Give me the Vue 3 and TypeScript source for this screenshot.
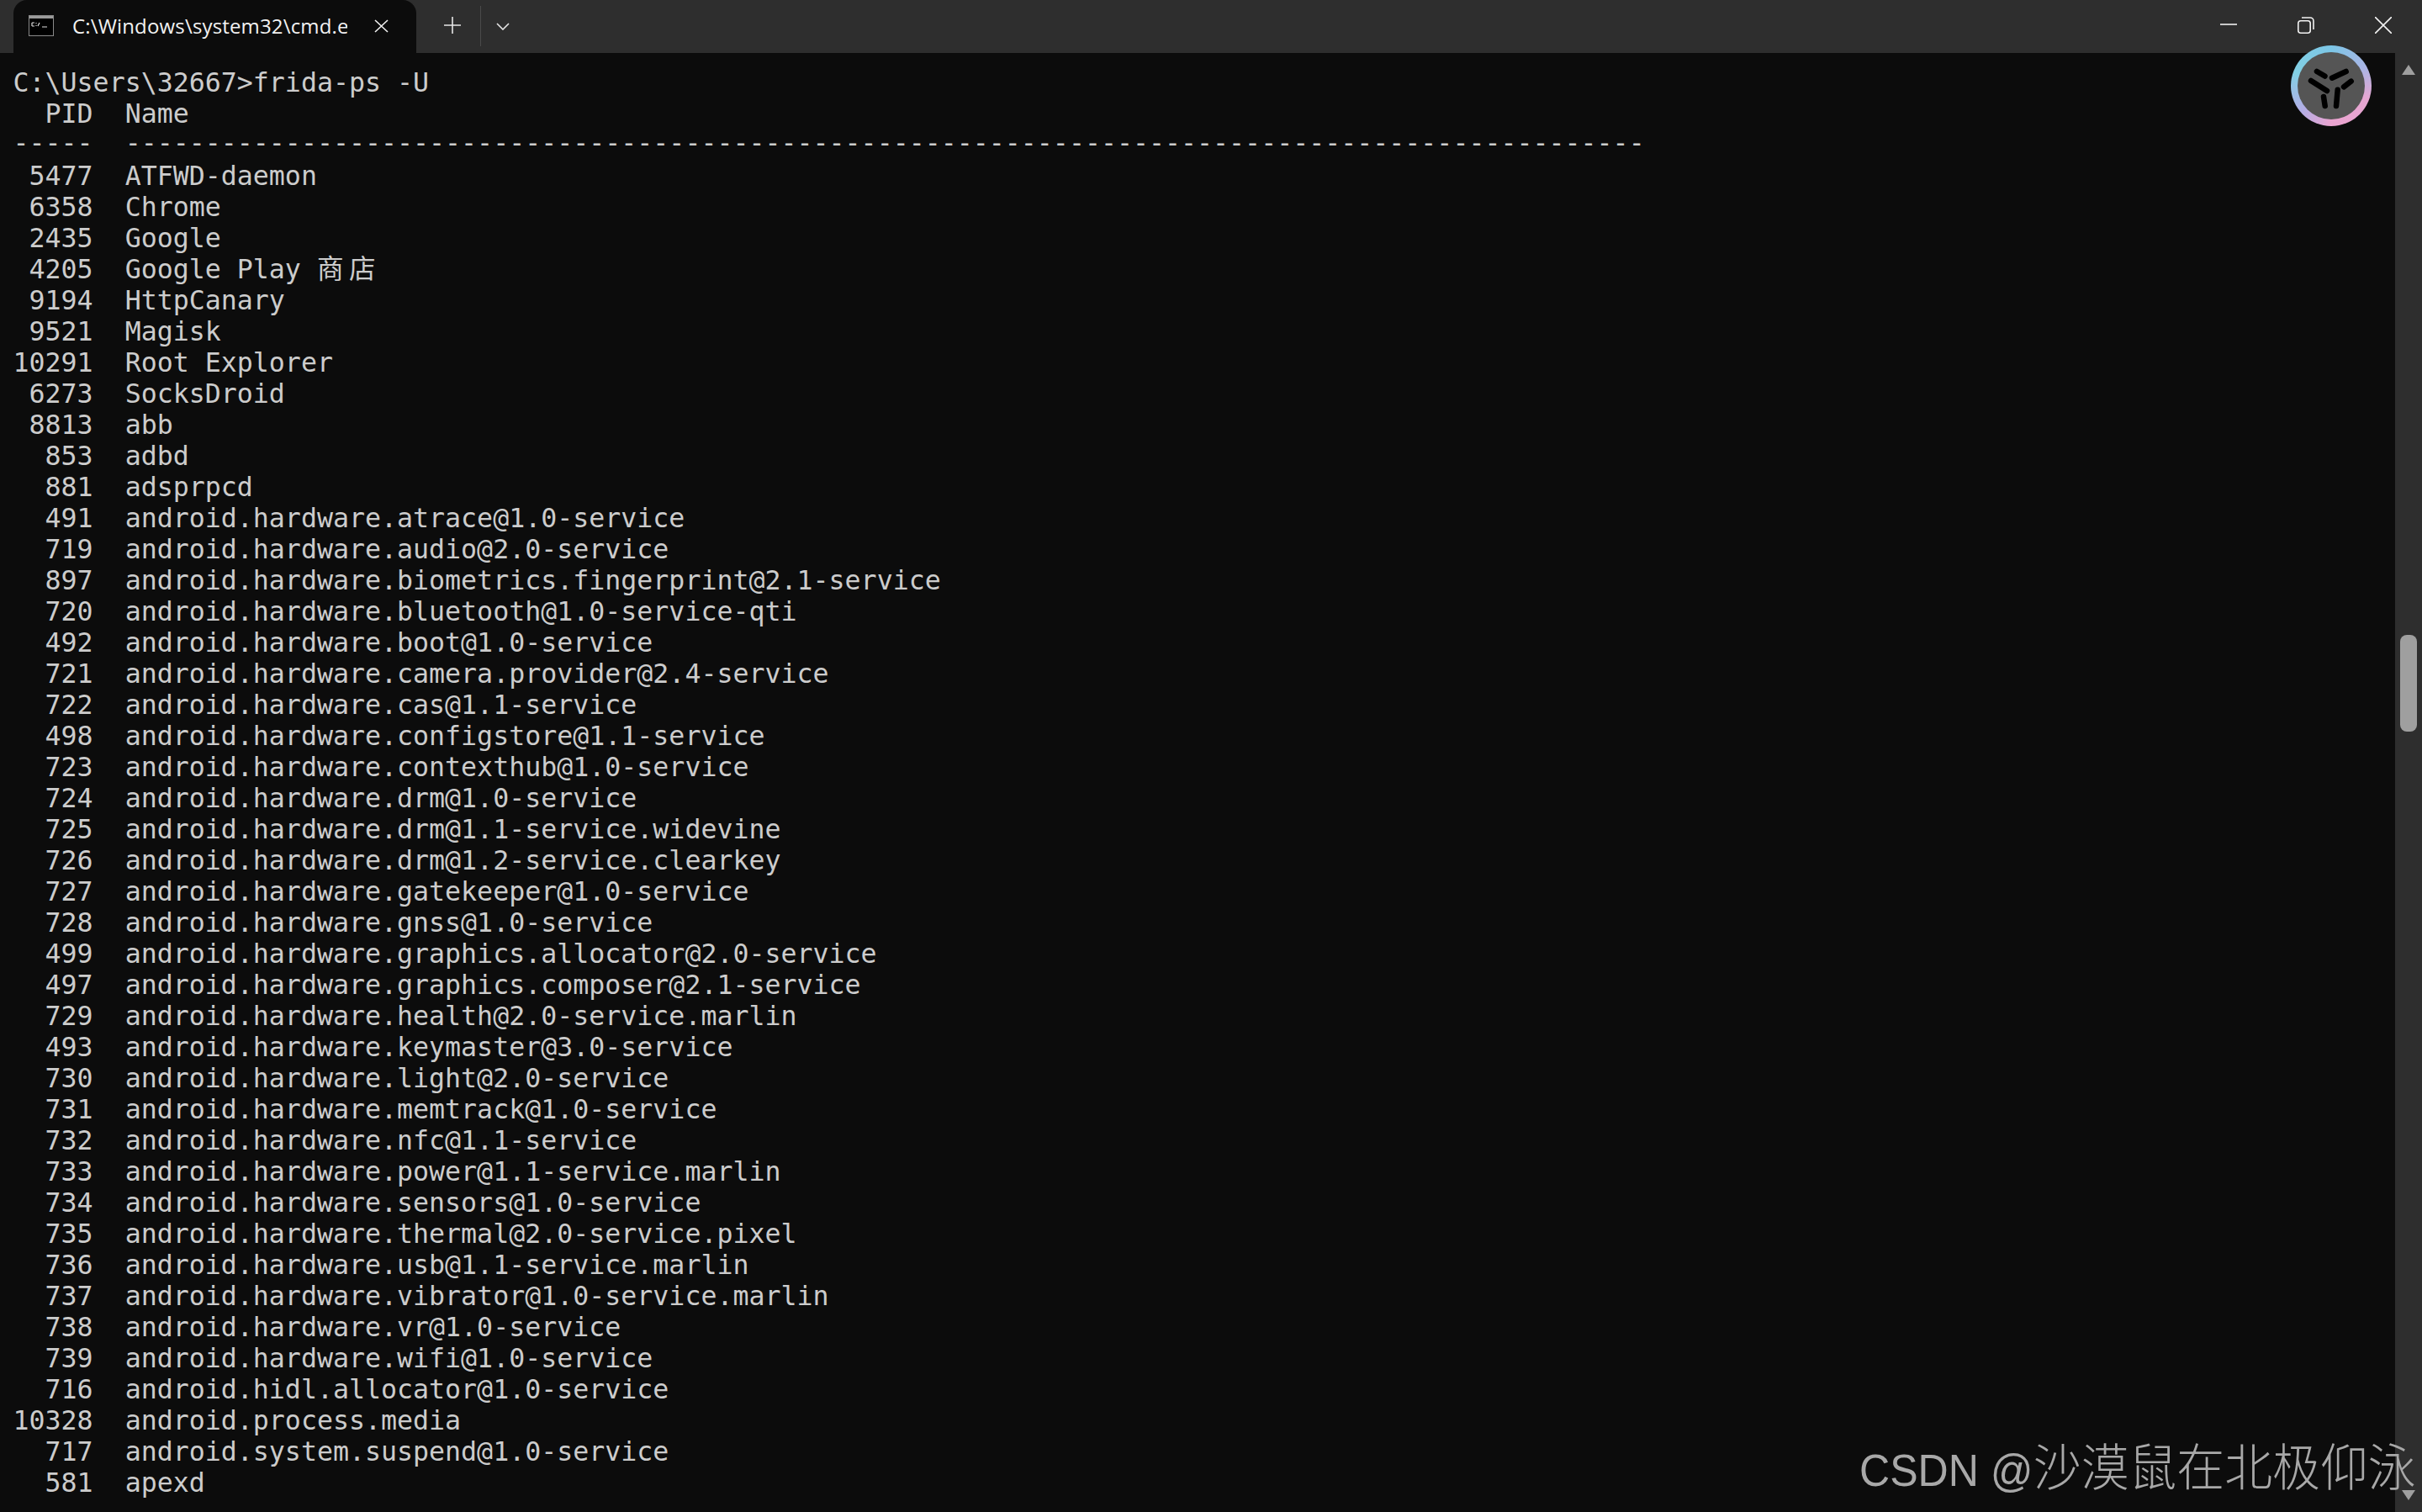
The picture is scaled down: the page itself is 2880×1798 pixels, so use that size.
<script setup lang="ts">
interface Row { key: number; text: string; cjk?: string }
const raw: [number, string, string?][] = [
  [5477, 'ATFWD-daemon'], [6358, 'Chrome'], [2435, 'Google'], [4205, 'Google Play ', '商店'],
  [9194, 'HttpCanary'], [9521, 'Magisk'], [10291, 'Root Explorer'], [6273, 'SocksDroid'],
  [8813, 'abb'], [853, 'adbd'], [881, 'adsprpcd'],
  [491, 'android.hardware.atrace@1.0-service'], [719, 'android.hardware.audio@2.0-service'],
  [897, 'android.hardware.biometrics.fingerprint@2.1-service'], [720, 'android.hardware.bluetooth@1.0-service-qti'],
  [492, 'android.hardware.boot@1.0-service'], [721, 'android.hardware.camera.provider@2.4-service'],
  [722, 'android.hardware.cas@1.1-service'], [498, 'android.hardware.configstore@1.1-service'],
  [723, 'android.hardware.contexthub@1.0-service'], [724, 'android.hardware.drm@1.0-service'],
  [725, 'android.hardware.drm@1.1-service.widevine'], [726, 'android.hardware.drm@1.2-service.clearkey'],
  [727, 'android.hardware.gatekeeper@1.0-service'], [728, 'android.hardware.gnss@1.0-service'],
  [499, 'android.hardware.graphics.allocator@2.0-service'], [497, 'android.hardware.graphics.composer@2.1-service'],
  [729, 'android.hardware.health@2.0-service.marlin'], [493, 'android.hardware.keymaster@3.0-service'],
  [730, 'android.hardware.light@2.0-service'], [731, 'android.hardware.memtrack@1.0-service'],
  [732, 'android.hardware.nfc@1.1-service'], [733, 'android.hardware.power@1.1-service.marlin'],
  [734, 'android.hardware.sensors@1.0-service'], [735, 'android.hardware.thermal@2.0-service.pixel'],
  [736, 'android.hardware.usb@1.1-service.marlin'], [737, 'android.hardware.vibrator@1.0-service.marlin'],
  [738, 'android.hardware.vr@1.0-service'], [739, 'android.hardware.wifi@1.0-service'],
  [716, 'android.hidl.allocator@1.0-service'], [10328, 'android.process.media'],
  [717, 'android.system.suspend@1.0-service'], [581, 'apexd'],
]
const rows: Row[] = raw.map(([p, n, c]) => ({ key: p, text: String(p).padStart(5, ' ') + '  ' + n, cjk: c }))
const prompt = 'C:\\Users\\32667>frida-ps -U'
const header = '  PID  Name'
const rule = '-----  ' + '-'.repeat(95)
</script>

<template>
  <div class="window">
    <header class="titlebar">
      <div class="tab">
        <svg class="tab-icon" width="30" height="25" viewBox="0 0 30 25">
          <rect x="0.5" y="0.5" width="29" height="24" fill="#000" stroke="#8a8a8a" />
          <rect x="1" y="1" width="28" height="3" fill="#9a9a9a" />
          <path d="M4 9h3M4 13h3M4 9v4M9 9v1M9 12v1M11 13l2-4M16 14h6" stroke="#ddd" stroke-width="1.2" fill="none" />
        </svg>
        <span class="tab-title">C:\Windows\system32\cmd.exe</span>
        <svg class="tab-close" width="17" height="16" viewBox="0 0 17 16">
          <path d="M1 1l15 14M16 1L1 15" stroke="#f2f2f2" stroke-width="1.6" fill="none" />
        </svg>
      </div>
      <svg class="new-tab" width="20" height="20" viewBox="0 0 20 20">
        <path d="M10 0v20M0 10h20" stroke="#e6e6e6" stroke-width="1.6" fill="none" />
      </svg>
      <div class="divider"></div>
      <svg class="chevron" width="16" height="9" viewBox="0 0 16 9">
        <path d="M1 1l7 7 7-7" stroke="#e6e6e6" stroke-width="1.6" fill="none" />
      </svg>
      <div class="controls">
        <svg width="20" height="20" viewBox="0 0 20 20"><path d="M0 9h20" stroke="#f2f2f2" stroke-width="1.6" /></svg>
        <svg width="20" height="20" viewBox="0 0 20 20">
          <rect x="0.8" y="4.8" width="14.4" height="14.4" rx="3" fill="none" stroke="#f2f2f2" stroke-width="1.6" />
          <path d="M5 1h10a4 4 0 0 1 4 4v10" fill="none" stroke="#f2f2f2" stroke-width="1.6" />
        </svg>
        <svg width="20" height="20" viewBox="0 0 20 20"><path d="M0 0l20 20M20 0L0 20" stroke="#f2f2f2" stroke-width="1.6" /></svg>
      </div>
    </header>

    <main class="body">
      <div class="terminal">
        <div class="line">{{ prompt }}</div>
        <div class="line">{{ header }}</div>
        <div class="line rule">{{ rule }}</div>
        <div v-for="r in rows" :key="r.key" class="line">{{ r.text }}<span v-if="r.cjk" class="cjk">{{ r.cjk }}</span></div>
      </div>
      <aside class="scrollbar">
        <span class="arrow up"></span>
        <span class="track"><span class="thumb"></span></span>
        <span class="arrow down"></span>
      </aside>
    </main>

    <div class="badge">
      <div class="badge-inner"></div>
      <svg class="badge-logo" width="96" height="96" viewBox="0 0 96 96">
        <g stroke="#000" stroke-width="6.5" stroke-linecap="round" fill="none">
          <path d="M31 31l9.500 5.500" />
          <path d="M49 38.700l16.700-7.700" />
          <path d="M24 42l19 12" />
          <path d="M63 49.300l8.700-6.600" />
          <path d="M39 61l1.700 11" />
          <path d="M55.700 52.700L54 72" />
        </g>
      </svg>
    </div>

    <div class="watermark">CSDN @<span class="wm-cjk">沙漠鼠在北极仰泳</span></div>
  </div>
</template>

<style scoped>
.window {
  position: relative;
  display: flex;
  flex-direction: column;
  height: 100vh;
  overflow: hidden;
  background: #0c0c0c;
}
.titlebar {
  display: flex;
  align-items: center;
  flex: 0 0 63px;
  height: 63px;
  background: #2e2e2e;
  padding-left: 16px;
}
.tab {
  display: flex;
  align-items: center;
  align-self: stretch;
  width: 479px;
  background: #0c0c0c;
  border-radius: 16px 16px 0 0;
  padding-left: 18px;
  box-sizing: border-box;
}
.tab-icon { flex: none; margin-right: 22px; margin-top: -2px; }
.tab-title {
  flex: none;
  width: 327px;
  overflow: hidden;
  white-space: nowrap;
  color: #f2f2f2;
  font: 24px/32px "Open Sans", "Noto Sans", sans-serif;
  letter-spacing: 0.16px;
  margin-top: -2px;
}
.tab-close { flex: none; margin-left: 32px; margin-top: -2px; }
.new-tab { flex: none; margin-left: 33px; margin-top: -3px; }
.divider { flex: none; width: 1px; height: 48px; margin-left: 23px; background: #4a4a4a; margin-top: -1px; }
.chevron { flex: none; margin-left: 18px; margin-top: -1px; }
.controls {
  display: flex;
  gap: 72px;
  margin-left: auto;
  padding-right: 36px;
  margin-top: -3px;
}
.body {
  flex: 1;
  display: flex;
  min-height: 0;
}
.terminal {
  flex: 1;
  padding: 17px 0 0 15.5px;
  overflow: hidden;
}
.line {
  height: 37px;
  font: 31.6px/37px "DejaVu Sans Mono", "Noto Sans CJK SC", monospace;
  color: #cccccc;
  white-space: pre;
}
.rule {
  margin-top: -2px;
  margin-bottom: 2px;
}
.cjk {
  font-family: "Noto Sans CJK SC", sans-serif;
  letter-spacing: 6.5px;
  line-height: 30px;
}
.scrollbar {
  flex: 0 0 32px;
  display: flex;
  flex-direction: column;
  align-items: center;
  background: #2e2e2e;
  padding: 14px 0;
  box-sizing: border-box;
}
.arrow {
  flex: none;
  width: 0;
  height: 0;
  border-left: 8px solid transparent;
  border-right: 8px solid transparent;
}
.arrow.up { border-bottom: 12px solid #9f9f9f; }
.arrow.down { border-top: 12px solid #9f9f9f; }
.track {
  flex: 1;
  align-self: stretch;
  padding-top: 666px;
  display: flex;
  justify-content: center;
  align-items: flex-start;
}
.thumb {
  width: 20px;
  height: 115px;
  border-radius: 8px;
  background: #9f9f9f;
}
.badge {
  position: absolute;
  left: 2724px;
  top: 54px;
  width: 96px;
  height: 96px;
  border-radius: 50%;
  background: conic-gradient(#7cc6e6 0deg, #a9b6e6 60deg, #e6a6d2 110deg, #eba4d0 180deg, #b3aee6 230deg, #82d0e4 290deg, #7cc6e6 360deg);
  display: flex;
  align-items: center;
  justify-content: center;
}
.badge-inner {
  width: 80px;
  height: 80px;
  border-radius: 50%;
  background: #555555;
}
.badge-logo {
  position: absolute;
  inset: 0;
}
.watermark {
  position: absolute;
  left: 2211px;
  top: 1712px;
  font: 53px/70px "Liberation Sans", "Noto Sans CJK SC", sans-serif;
  color: #a8a8a8;
  white-space: nowrap;
  transform: scaleX(0.945);
  transform-origin: left center;
}
.wm-cjk {
  font-size: 60.200px;
  font-weight: 300;
}
</style>
